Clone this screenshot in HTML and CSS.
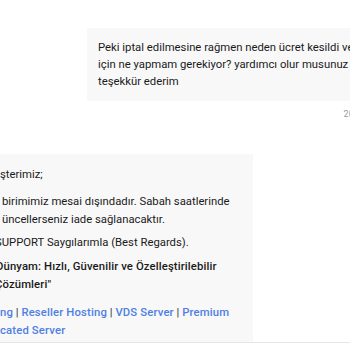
FILE: index.html
```html
<!DOCTYPE html>
<html lang="tr">
<head>
    <meta charset="UTF-8">
    <meta name="viewport" content="width=device-width, initial-scale=1.0">
    <title>Destek Talebi</title>
    <link rel="stylesheet" href="styles.css">
</head>
<body>
    <div class="chat">
        <div class="message outgoing">
            <div class="bubble">
                Peki iptal edilmesine rağmen neden ücret kesildi ve iade<br>
                için ne yapmam gerekiyor? yardımcı olur musunuz<br>
                teşekkür ederim
            </div>
            <div class="time">20:14</div>
        </div>

        <div class="message incoming">
            <div class="bubble">
                <p class="para p-greet">şterimiz;</p>
                <p class="para p-body">
                    <span class="line indent">birimimiz mesai dışındadır. Sabah saatlerinde</span>
                    <span class="line indent">üncellerseniz iade sağlanacaktır.</span>
                </p>
                <p class="para p-sign"><span class="cut-s">S</span>UPPORT Saygılarımla (Best Regards).</p>
                <p class="para p-slogan">
                    <span class="line"><span class="cut-d">D</span>ünyam: Hızlı, Güvenilir ve Özelleştirilebilir</span>
                    <span class="line"><span class="cut-c">Ç</span>özümleri"</span>
                </p>
                <p class="para p-links">
                    <span class="line"><a href="#">ng</a> | <a href="#">Reseller Hosting</a> | <a href="#">VDS Server</a> | <a href="#">Premium</a></span>
                    <span class="line"><a href="#">cated Server</a></span>
                </p>
            </div>
        </div>
    </div>
    <div class="composer"></div>
</body>
</html>
```

FILE: styles.css
```css
body {
    margin: 0;
    background-color: #ffffff;
    font-family: Roboto, "Liberation Sans", sans-serif;
    color: #1a1a1a;
    overflow: hidden;
}
.chat {
    width: 366px;
    height: 343px;
    overflow: hidden;
    border-bottom: 1px solid #e6e6e6;
    padding-top: 28px;
    box-sizing: border-box;
}
.message {
    display: flex;
    flex-direction: column;
}
.bubble {
    background-color: #f8f8f8;
    font-size: 11.3px;
    line-height: 17px;
    white-space: nowrap;
}
.outgoing .bubble {
    margin-left: 87px;
    padding: 11px 11px;
}
.time {
    margin-top: 8px;
    text-align: right;
    font-size: 9px;
    color: #9a9a9a;
}
.incoming {
    margin-top: 35px;
}
.incoming .bubble {
    width: 253px;
    box-sizing: border-box;
    padding: 12px 0 12px 0;
    line-height: 18px;
}
.para {
    margin: 0;
}
.line {
    display: block;
}
.indent {
    padding-left: 2px;
}
.p-greet {
    margin-bottom: 9px;
}
.p-body {
    margin-bottom: 5px;
}
.p-sign {
    margin-bottom: 6px;
}
.p-slogan {
    font-weight: 500;
    letter-spacing: 0.12px;
    margin-bottom: 10px;
}
.p-links a {
    color: #4f7fe3;
    font-weight: 500;
    letter-spacing: 0.15px;
    text-decoration: none;
}
.p-links {
    color: #333333;
}
.cut-s {
    margin-left: -5px;
}
.cut-d {
    margin-left: -4px;
}
.cut-c {
    margin-left: -5px;
}
.composer {
    height: 7px;
}
```
